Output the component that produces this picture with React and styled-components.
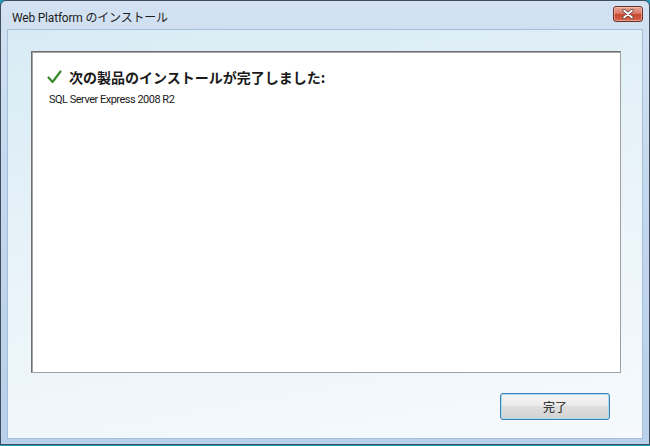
import React from 'react'
import styled, { createGlobalStyle } from 'styled-components'

const Global = createGlobalStyle`
  html, body {
    margin: 0;
    padding: 0;
    background: #1f9bb5;
  }
  body {
    font-family: "Noto Sans", "Noto Sans CJK JP", sans-serif;
  }
`

const Window = styled.div`
  width: 650px;
  height: 445px;
  box-sizing: border-box;
  border: 1px solid #3f4d5c;
  border-radius: 6px 6px 0 0;
  background: linear-gradient(180deg, #d3e2f2 0%, #c4d8ee 40%, #b9d0ea 100%);
  display: flex;
  flex-direction: column;
  overflow: hidden;
`

const TitleBar = styled.div`
  height: 28px;
  display: flex;
  align-items: center;
  justify-content: space-between;
  padding: 0 6px 0 11px;
  flex-shrink: 0;
`

const Title = styled.span`
  font-family: Roboto, "Noto Sans CJK JP", sans-serif;
  font-size: 12px;
  letter-spacing: -0.2px;
  color: #1e1e1e;
  margin-top: 2px;
`

const CloseButton = styled.div`
  width: 30px;
  height: 16px;
  box-sizing: border-box;
  margin-top: -2px;
  border: 1px solid #6b3028;
  border-radius: 3px;
  background: linear-gradient(180deg, #e7a393 0%, #d87a66 45%, #c6462f 55%, #d56a4d 100%);
  box-shadow: inset 0 0 0 1px rgba(255, 220, 210, 0.45);
  display: flex;
  align-items: center;
  justify-content: center;
`

const Client = styled.div`
  flex: 1;
  margin: 0 6px 6px 6px;
  border: 1px solid #a6bfd9;
  background: linear-gradient(170deg, #d8ebf4 0%, #e8f3f9 45%, #f6fafd 100%);
  display: flex;
  flex-direction: column;
  padding: 21px 21px 18px 23px;
`

const Panel = styled.div`
  height: 322px;
  box-sizing: border-box;
  background: #fff;
  border: 1px solid #a0a0a0;
  border-top-color: #6f6f6f;
  border-left-color: #6f6f6f;
  box-shadow: inset 1px 1px 0 #a5a5a5;
  padding: 14px 15px;
`

const Heading = styled.div`
  display: flex;
  align-items: center;
  gap: 7px;
  font-family: "Noto Sans CJK JP", sans-serif;
  font-size: 14px;
  font-weight: 700;
  color: #1a1a1a;
  height: 22px;
`

const Product = styled.div`
  font-family: Roboto, "Noto Sans", sans-serif;
  font-size: 11px;
  letter-spacing: -0.5px;
  color: #1a1a1a;
  margin-top: 5px;
  padding-left: 2px;
`

const Footer = styled.div`
  display: flex;
  justify-content: flex-end;
  padding-top: 20px;
  padding-right: 11px;
`

const Button = styled.button`
  width: 110px;
  height: 27px;
  border: 1px solid #3c7fb1;
  border-radius: 3px;
  background: linear-gradient(180deg, #f4f4f4 0%, #ececec 45%, #dedede 50%, #d3d3d3 100%);
  box-shadow: inset 0 0 0 1px #a8dcf5;
  font-family: "Noto Sans CJK JP", sans-serif;
  font-size: 12px;
  color: #111;
  padding: 0;
`

const Check = () => (
  <svg width="15" height="14" viewBox="0 0 15 14">
    <path d="M1.5 7.5 L5.5 12 L13.5 1.5" fill="none" stroke="#3a8a2a" strokeWidth="2.2" strokeLinecap="round" strokeLinejoin="round" />
  </svg>
)

const CloseX = () => (
  <svg width="12" height="10" viewBox="0 0 12 10">
    <path d="M2 1.5 L10 8.5 M10 1.5 L2 8.5" stroke="#5a3a36" strokeWidth="3.4" strokeLinecap="round" />
    <path d="M2 1.5 L10 8.5 M10 1.5 L2 8.5" stroke="#ffffff" strokeWidth="1.8" strokeLinecap="round" />
  </svg>
)

export default function App() {
  return (
    <>
      <Global />
      <Window>
        <TitleBar>
          <Title>Web Platform のインストール</Title>
          <CloseButton>
            <CloseX />
          </CloseButton>
        </TitleBar>
        <Client>
          <Panel>
            <Heading>
              <Check />
              次の製品のインストールが完了しました:
            </Heading>
            <Product>SQL Server Express 2008 R2</Product>
          </Panel>
          <Footer>
            <Button>完了</Button>
          </Footer>
        </Client>
      </Window>
    </>
  )
}
